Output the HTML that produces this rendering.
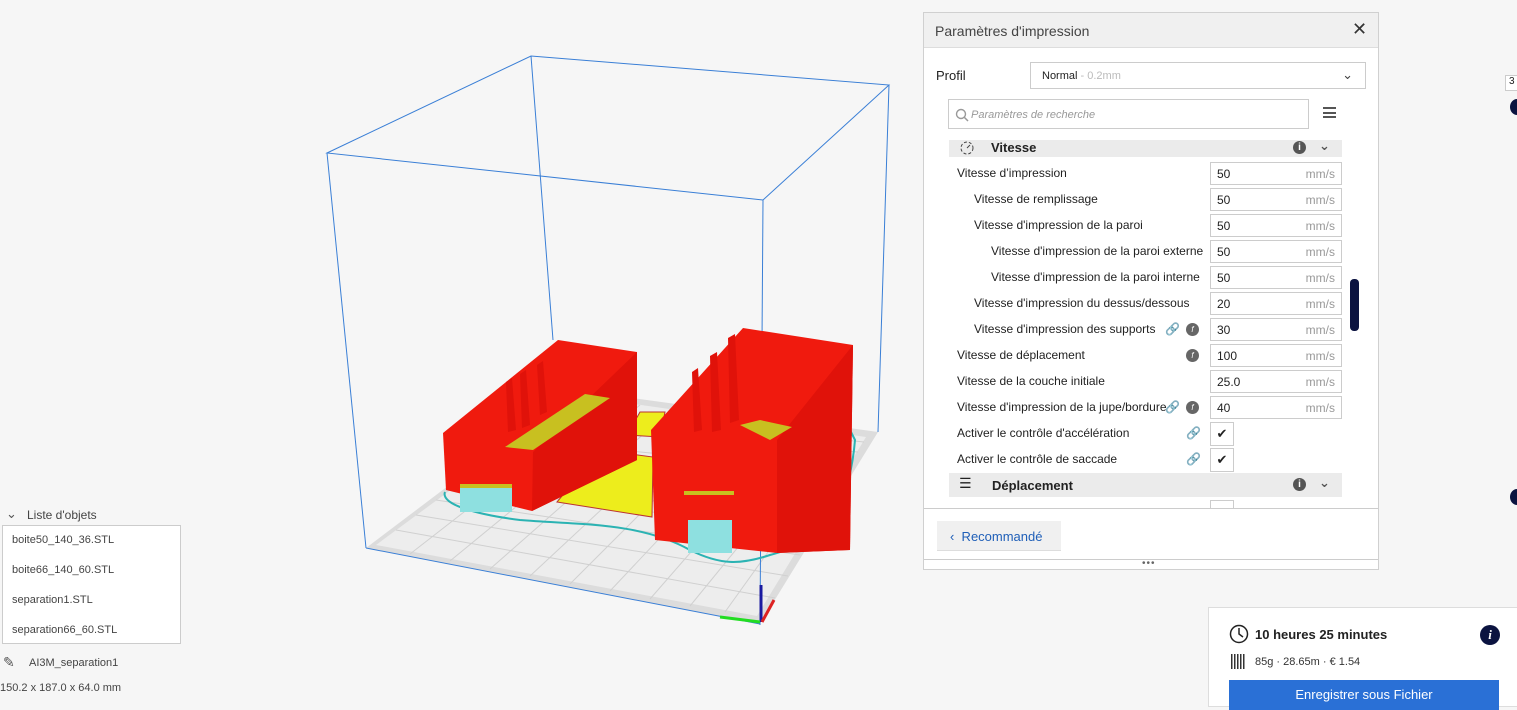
<!DOCTYPE html>
<html><head><meta charset="utf-8"><style>
*{margin:0;padding:0;box-sizing:border-box}
body{width:1517px;height:698px;overflow:hidden;background:#f6f6f6;font-family:"Liberation Sans","DejaVu Sans",sans-serif;color:#222;position:relative;font-size:12px}
.a{position:absolute}
.panel{left:923px;top:12px;width:456px;height:558px;background:#fff;border:1px solid #d0d0d0}
.hdr{left:0;top:0;width:454px;height:35px;background:#f0f0f0;border-bottom:1px solid #ddd;font-size:14px;color:#444;padding:10px 0 0 11px}
.row{position:absolute;left:0;width:454px;height:26px;font-size:12px;color:#222}
.row .l{position:absolute;top:6px}
.inp{position:absolute;left:286px;top:2px;width:132px;height:23px;border:1px solid #ccc;background:#fff}
.inp b{font-weight:normal;position:absolute;left:6px;top:4px}
.inp i{font-style:normal;position:absolute;right:6px;top:4px;color:#999}
.chk{position:absolute;left:286px;top:2px;width:24px;height:24px;border:1px solid #ccc;text-align:center;font-size:13px;line-height:22px}
.fx{position:absolute;left:262px;top:7px;width:13px;height:13px;border-radius:50%;background:#666;color:#fff;font-size:8px;text-align:center;line-height:13px;font-style:italic}
.lk{position:absolute;top:6px;color:#555;font-size:12px}
.sec{position:absolute;left:25px;width:393px;background:#ebebeb;font-weight:bold;font-size:13px}
</style></head><body>

<svg class="a" style="left:0;top:0" width="920" height="698">
<!-- plate -->
<polygon points="366,548 760,624 878,432 575,390" fill="#dcdcdc"/>
<polygon points="376,545 757,616 866,437 578,396" fill="#ededed"/>
<g stroke="#d0d0d0" stroke-width="1">
<line x1="396" y1="530" x2="775" y2="598"/><line x1="416" y1="515" x2="788" y2="576"/><line x1="436" y1="500" x2="800" y2="555"/><line x1="456" y1="485" x2="812" y2="534"/><line x1="476" y1="470" x2="824" y2="513"/><line x1="496" y1="455" x2="836" y2="492"/><line x1="516" y1="440" x2="848" y2="472"/><line x1="536" y1="425" x2="858" y2="452"/><line x1="556" y1="410" x2="864" y2="442"/>
<line x1="410" y1="554" x2="608" y2="400"/><line x1="450" y1="561" x2="640" y2="405"/><line x1="490" y1="569" x2="672" y2="409"/><line x1="530" y1="576" x2="704" y2="414"/><line x1="570" y1="584" x2="736" y2="418"/><line x1="610" y1="591" x2="768" y2="423"/><line x1="650" y1="599" x2="800" y2="427"/><line x1="690" y1="606" x2="832" y2="432"/><line x1="725" y1="612" x2="852" y2="435"/>
</g>
<!-- box lines -->
<g stroke="#3a7fd6" stroke-width="1" fill="none">
<polygon points="327,153 531,56 889,85 763,200"/>
<line x1="327" y1="153" x2="366" y2="548"/><line x1="763" y1="200" x2="760" y2="625"/><line x1="889" y1="85" x2="878" y2="432"/><line x1="531" y1="56" x2="553" y2="340"/>
<line x1="366" y1="548" x2="760" y2="624"/>
</g>
<!-- skirt -->
<path d="M445,492 C440,505 480,515 520,520 C580,525 640,522 690,550 C720,565 740,565 770,555 C830,540 850,500 855,440 L850,430" stroke="#2bb3b3" stroke-width="2" fill="none"/>
<!-- yellow pads -->
<polygon points="557,502 600,450 653,457 652,517" fill="#eded1c" stroke="#b33" stroke-width="1"/>
<polygon points="627,435 640,412 665,412 660,437" fill="#eded1c" stroke="#b33" stroke-width="1"/>
<!-- left box -->
<polygon points="443,433 558,340 637,352 637,460 532,511 446,490" fill="#f01a0e"/>
<polygon points="533,452 637,352 637,460 532,511" fill="#e0120a"/>
<polygon points="505,447 585,394 610,398 533,450" fill="#c8c020"/>
<polygon points="506,382 512,378 516,430 508,432" fill="#e0120a"/>
<polygon points="520,374 526,370 530,425 522,428" fill="#e0120a"/>
<polygon points="537,365 543,361 547,412 540,415" fill="#e0120a"/>
<polygon points="460,487 512,487 512,512 460,512" fill="#8ee0e0"/>
<rect x="460" y="484" width="52" height="4" fill="#c8c020"/>
<!-- right box -->
<polygon points="651,430 743,328 853,345 850,550 777,553 655,540" fill="#f01a0e"/>
<polygon points="777,440 853,345 850,550 777,553" fill="#e0120a"/>
<polygon points="740,425 760,420 792,427 770,440" fill="#c8c020"/>
<polygon points="692,372 698,368 702,430 694,432" fill="#e0120a"/>
<polygon points="710,356 717,352 721,430 712,432" fill="#e0120a"/>
<polygon points="728,338 735,334 739,420 730,423" fill="#e0120a"/>
<polygon points="688,520 732,520 732,553 688,553" fill="#8ee0e0"/>
<rect x="684" y="491" width="50" height="4" fill="#c8c020"/>
<!-- axes -->
<line x1="761" y1="585" x2="761" y2="622" stroke="#1a1aa0" stroke-width="3"/>
<line x1="720" y1="617" x2="760" y2="622" stroke="#22dd22" stroke-width="3"/>
<line x1="762" y1="622" x2="774" y2="600" stroke="#dd2222" stroke-width="3"/>
</svg>

<!-- object list -->
<div class="a" style="left:6px;top:506px;font-size:13px;color:#555">&#8964;</div>
<div class="a" style="left:27px;top:508px;font-size:12px;color:#444">Liste d'objets</div>
<div class="a" style="left:2px;top:525px;width:179px;height:119px;background:#fff;border:1px solid #ccc;font-size:11px;color:#444">
<div class="a" style="left:9px;top:8px">boite50_140_36.STL</div>
<div class="a" style="left:9px;top:38px">boite66_140_60.STL</div>
<div class="a" style="left:9px;top:68px">separation1.STL</div>
<div class="a" style="left:9px;top:98px">separation66_60.STL</div>
</div>
<div class="a" style="left:3px;top:654px;font-size:14px;color:#555">&#9998;</div>
<div class="a" style="left:29px;top:657px;font-size:11px;color:#444">AI3M_separation1</div>
<div class="a" style="left:0;top:682px;font-size:11px;color:#444">150.2 x 187.0 x 64.0 mm</div>

<!-- right edge -->
<div class="a" style="left:1505px;top:75px;width:14px;height:16px;border:1px solid #ccc;background:#fff;font-size:10px;padding-left:3px">3</div>
<div class="a" style="left:1510px;top:99px;width:14px;height:16px;border-radius:50%;background:#0b1340"></div>
<div class="a" style="left:1510px;top:489px;width:14px;height:16px;border-radius:50%;background:#0b1340"></div>

<!-- panel -->
<div class="a panel">
<div class="a hdr">Paramètres d'impression<span class="a" style="left:428px;top:6px;font-size:18px;color:#333;font-weight:bold">✕</span></div>
<div class="a" style="left:12px;top:55px;font-size:13px">Profil</div>
<div class="a" style="left:106px;top:49px;width:336px;height:27px;border:1px solid #ccc;font-size:11px;padding:7px 0 0 11px">Normal <span style="color:#bbb">- 0.2mm</span><span class="a" style="right:12px;top:4px;font-size:13px;color:#444">&#8964;</span></div>
<div class="a" style="left:24px;top:86px;width:361px;height:30px;border:1px solid #ccc;font-size:11px;color:#999;font-style:italic;padding:9px 0 0 22px">Paramètres de recherche
<svg class="a" style="left:6px;top:8px" width="14" height="14"><circle cx="6" cy="6" r="4.5" stroke="#999" stroke-width="1.4" fill="none"/><line x1="9.5" y1="9.5" x2="13" y2="13" stroke="#999" stroke-width="1.5"/></svg></div>
<div class="a" style="left:399px;top:94px;width:13px;height:11px;border-top:2px solid #555;border-bottom:2px solid #555"><div style="margin-top:2.5px;border-top:2px solid #555"></div></div>

<div class="sec" style="top:127px;height:17px"><svg class="a" style="left:10px;top:1px" width="16" height="14"><circle cx="8" cy="7" r="6" stroke="#444" stroke-dasharray="3 2" fill="none"/><line x1="8" y1="7" x2="11" y2="4" stroke="#444"/></svg><span class="a" style="left:42px;top:0">Vitesse</span><span class="a" style="left:344px;top:1px;width:13px;height:13px;border-radius:50%;background:#555;color:#fff;font-size:10px;text-align:center;line-height:13px">i</span><span class="a" style="left:370px;top:-2px;color:#555">&#8964;</span></div>

<div class="row" style="top:147px"><span class="l" style="left:33px">Vitesse d’impression</span><div class="inp"><b>50</b><i>mm/s</i></div></div>
<div class="row" style="top:173px"><span class="l" style="left:50px">Vitesse de remplissage</span><div class="inp"><b>50</b><i>mm/s</i></div></div>
<div class="row" style="top:199px"><span class="l" style="left:50px">Vitesse d'impression de la paroi</span><div class="inp"><b>50</b><i>mm/s</i></div></div>
<div class="row" style="top:225px"><span class="l" style="left:67px">Vitesse d'impression de la paroi externe</span><div class="inp"><b>50</b><i>mm/s</i></div></div>
<div class="row" style="top:251px"><span class="l" style="left:67px">Vitesse d'impression de la paroi interne</span><div class="inp"><b>50</b><i>mm/s</i></div></div>
<div class="row" style="top:277px"><span class="l" style="left:50px">Vitesse d'impression du dessus/dessous</span><div class="inp"><b>20</b><i>mm/s</i></div></div>
<div class="row" style="top:303px"><span class="l" style="left:50px">Vitesse d'impression des supports</span><span class="lk" style="left:241px">&#128279;</span><span class="fx">f</span><div class="inp"><b>30</b><i>mm/s</i></div></div>
<div class="row" style="top:329px"><span class="l" style="left:33px">Vitesse de déplacement</span><span class="fx">f</span><div class="inp"><b>100</b><i>mm/s</i></div></div>
<div class="row" style="top:355px"><span class="l" style="left:33px">Vitesse de la couche initiale</span><div class="inp"><b>25.0</b><i>mm/s</i></div></div>
<div class="row" style="top:381px"><span class="l" style="left:33px">Vitesse d'impression de la jupe/bordure</span><span class="lk" style="left:241px">&#128279;</span><span class="fx">f</span><div class="inp"><b>40</b><i>mm/s</i></div></div>
<div class="row" style="top:407px"><span class="l" style="left:33px">Activer le contrôle d'accélération</span><span class="lk" style="left:262px">&#128279;</span><div class="chk">✔</div></div>
<div class="row" style="top:433px"><span class="l" style="left:33px">Activer le contrôle de saccade</span><span class="lk" style="left:262px">&#128279;</span><div class="chk">✔</div></div>
<div class="sec" style="top:460px;height:24px"><span class="a" style="left:10px;top:2px;font-size:14px">&#9776;</span><span class="a" style="left:43px;top:5px">Déplacement</span><span class="a" style="left:344px;top:5px;width:13px;height:13px;border-radius:50%;background:#555;color:#fff;font-size:10px;text-align:center;line-height:13px">i</span><span class="a" style="left:370px;top:2px;color:#555">&#8964;</span></div>
<div class="a" style="left:286px;top:487px;width:24px;height:8px;border:1px solid #ccc;border-bottom:none"></div>
<div class="a" style="left:426px;top:266px;width:9px;height:52px;border-radius:4px;background:#0b1340"></div>
<div class="a" style="left:0;top:495px;width:454px;border-top:1px solid #ccc"></div>
<div class="a" style="left:13px;top:508px;width:124px;height:30px;background:#f0f0f0;border-bottom:1px solid #ddd;color:#1f5fb8;font-size:13px;padding:8px 0 0 13px">‹&nbsp; Recommandé</div>
<div class="a" style="left:0;top:546px;width:454px;border-top:1px solid #ccc"></div>
<div class="a" style="left:218px;top:545px;font-size:10px;color:#666;letter-spacing:1px">•••</div>
</div>

<!-- bottom right -->
<div class="a" style="left:1208px;top:607px;width:320px;height:100px;background:#fff;border:1px solid #ddd">
<svg class="a" style="left:20px;top:16px" width="20" height="20"><circle cx="10" cy="10" r="8.5" stroke="#222" stroke-width="1.5" fill="none"/><path d="M10 4 V10 L14 13" stroke="#222" stroke-width="1.5" fill="none"/></svg>
<div class="a" style="left:46px;top:19px;font-size:13px;font-weight:bold">10 heures 25 minutes</div>
<div class="a" style="left:271px;top:17px;width:20px;height:20px;border-radius:50%;background:#0b1340;color:#fff;font-weight:bold;font-style:italic;font-size:13px;text-align:center;line-height:20px;font-family:'Liberation Serif',serif">i</div>
<div class="a" style="left:22px;top:46px;width:14px;height:15px;background:repeating-linear-gradient(90deg,#333 0 1.5px,transparent 1.5px 3px)"></div>
<div class="a" style="left:46px;top:48px;font-size:11px;color:#333">85g · 28.65m · € 1.54</div>
<div class="a" style="left:20px;top:72px;width:270px;height:30px;background:#2a70d6;color:#fff;font-size:13px;text-align:center;padding-top:7px">Enregistrer sous Fichier</div>
</div>
</body></html>
